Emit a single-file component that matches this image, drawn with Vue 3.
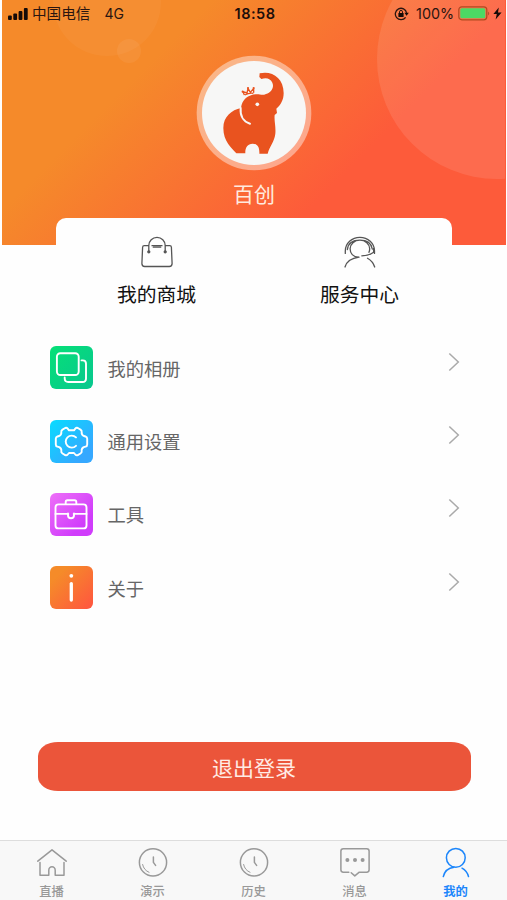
<script setup>
const shortcuts = [
  { id: 'mall', label: '我的商城' },
  { id: 'service', label: '服务中心' },
]
const menu = [
  { id: 'album', label: '我的相册' },
  { id: 'settings', label: '通用设置' },
  { id: 'tools', label: '工具' },
  { id: 'about', label: '关于' },
]
const tabs = [
  { id: 'live', label: '直播' },
  { id: 'demo', label: '演示' },
  { id: 'history', label: '历史' },
  { id: 'message', label: '消息' },
  { id: 'mine', label: '我的' },
]
const active = 'mine'
</script>

<template>
  <div class="screen">
    <header class="hero">
      <svg class="bubbles" viewBox="0 0 503 245">
        <circle cx="105" cy="2" r="54" fill="#fff" fill-opacity=".04" />
        <circle cx="127" cy="51" r="12" fill="#fff" fill-opacity=".06" />
        <circle cx="495" cy="59" r="120" fill="#fff" fill-opacity=".1" />
      </svg>
      <div class="status">
        <div class="status-left">
          <svg class="signal" width="20" height="12" viewBox="0 0 20 12">
            <rect x="0" y="7.6" width="3.8" height="4.4" rx="1" />
            <rect x="5.3" y="5.4" width="3.8" height="6.6" rx="1" />
            <rect x="10.6" y="3" width="3.8" height="9" rx="1" />
            <rect x="15.9" y="0" width="3.8" height="12" rx="1" />
          </svg>
          <span class="carrier">中国电信</span>
          <span class="net">4G</span>
        </div>
        <span class="time">18:58</span>
        <div class="status-right">
          <svg width="15" height="14" viewBox="0 0 15 14">
            <path d="M12.6 5.8A5.7 5.7 0 1 0 11.6 10.4" fill="none" stroke="#2a1510" stroke-width="1.3" />
            <path d="M10.4 5.8h4.4l-2.2 2.9z" />
            <rect x="4.4" y="6" width="5.2" height="4" rx=".5" />
            <path d="M5.5 6V4.9a1.5 1.5 0 0 1 3 0V6" fill="none" stroke="#2a1510" stroke-width="1" />
          </svg>
          <span class="percent">100%</span>
          <svg class="battery" width="33" height="15" viewBox="0 0 33 15">
            <rect x=".8" y=".8" width="28" height="13" rx="3" fill="none" stroke="#b04a20" stroke-width="1.2" />
            <rect x="2.3" y="2.3" width="25" height="10" rx="1.5" fill="#4cd964" />
            <path d="M30.2 5.4q2 2 0 4z" fill="#a8452b" />
          </svg>
          <svg width="9" height="13" viewBox="0 0 9 13"><path d="M5.8.5.4 7h3.4L2.6 12.5 8.6 5.5H5z" /></svg>
        </div>
      </div>
      <svg class="avatar" viewBox="36 31 348 348">
        <circle cx="210" cy="205" r="172" fill="#fff" fill-opacity=".43" />
        <circle cx="210" cy="205" r="156" fill="#f7f7f6" />
        <path fill="#e9531f" d="M227 86C262 77 299 98 299 145C299 166 290 181 277 192L279 205L272 211C270 229 276 246 274 267C271 292 257 304 251 327H226C227 308 221 297 206 297C190 297 183 310 184 326H157C143 309 118 291 118 250C118 216 143 196 171 190C174 164 194 149 219 149C229 149 236 153 246 148C263 142 271 127 265 114C260 102 247 97 232 103L226 97Z" />
        <path d="M170 190C168 212 177 231 198 237" fill="none" stroke="#f7f7f6" stroke-width="6" stroke-linecap="round" />
        <circle cx="220" cy="179" r="5.5" fill="#f7f7f6" />
        <path d="M181 151L177 141L189 145L192 131L199 143L209 131L209 144M182 151Q196 144 208 146" fill="none" stroke="#e9531f" stroke-width="4" stroke-linejoin="round" />
        <g fill="#e9531f"><circle cx="176" cy="141" r="3.2" /><circle cx="192" cy="130" r="3.2" /><circle cx="209" cy="130" r="3.2" /></g>
      </svg>
      <div class="nickname">百创</div>
    </header>

    <section class="card">
      <div v-for="s in shortcuts" :key="s.id" class="shortcut">
        <svg v-if="s.id === 'mall'" width="32" height="34" viewBox="0 0 32 34" class="line dark">
          <path d="M7.7 9.7H3.2Q1.7 9.7 1.6 11.2L.9 27.5Q.9 30.5 3.7 30.5H28.3Q31.1 30.5 31.1 27.5L30.4 11.2Q30.3 9.7 28.8 9.7H24.3M11 9.7H21M7.8 15.8V9.5A8.2 8.2 0 0 1 24.2 9.5V15.8M12.3 11.2H19.7" />
          <circle cx="7.8" cy="15.8" r="1" fill="#555" /><circle cx="24.2" cy="15.8" r="1" fill="#555" />
        </svg>
        <svg v-else width="32" height="34" viewBox="0 0 32 34" class="line dark">
          <path d="M1.3 17.4V15A14.6 13.7 0 0 1 30.5 15V17.4M29.6 12.5V16.2Q25 19.8 17.8 19.8M14.5 21.1C9 21.1 6.1 17.2 6.1 12.8A9.8 8.6 0 0 1 25.7 12.8Q25.7 15 24.9 16.3M3.4 13.5Q4.5 4.2 15.9 4.2Q26.8 4.2 28.3 13M1 31Q3.5 22.7 15 21.2M23.5 22.2Q28.8 25 30.7 31" />
        </svg>
        <span>{{ s.label }}</span>
      </div>
    </section>

    <ul class="menu">
      <li v-for="m in menu" :key="m.id" class="row">
        <span class="tile" :class="m.id">
          <svg v-if="m.id === 'album'" viewBox="0 0 43 43" class="line">
            <rect x="6.9" y="7.2" width="21.8" height="21.8" rx="3.5" />
            <path d="M31.5 14.4h1.2q3.3 0 3.3 3.3v14.8q0 3.5-3.5 3.5H18.2q-3.5 0-3.5-3.5v-1" />
          </svg>
          <svg v-else-if="m.id === 'settings'" viewBox="0 0 43 43" class="line">
            <path d="M19 10.3H24L25.3 8.6Q26.3 7.4 27.8 8L30.5 9.6Q32 10.6 31.7 12.2Q31.3 14.8 33.8 16L35.6 16.5Q37.2 17 37.2 18.8V24.4Q37.2 26.2 35.6 26.6L33.8 27.2Q31.3 28.4 31.7 31Q32 32.6 30.5 33.5L27.8 35.1Q26.3 35.8 25.3 34.5L24 33H19L17.7 34.5Q16.7 35.8 15.2 35.1L12.5 33.5Q11 32.6 11.3 31Q11.7 28.4 9.2 27.2L7.4 26.6Q5.8 26.2 5.8 24.4V18.8Q5.8 17 7.4 16.5L9.2 16Q11.7 14.8 11.3 12.2Q11 10.6 12.5 9.6L15.2 8Q16.7 7.4 17.7 8.6Z" />
            <path d="M26 17.4A6 6 0 1 0 26 25.8" />
          </svg>
          <svg v-else-if="m.id === 'tools'" viewBox="0 0 43 43" class="line">
            <rect x="5.5" y="11.4" width="31" height="24" rx="3" />
            <path d="M15.7 11V8.9q0-1.7 1.7-1.7h7.2q1.7 0 1.7 1.7V11M5.5 20.9h12.8M23.7 20.9h12.8M18 20.5v1.8a3 3 0 0 0 6 0v-1.8" />
          </svg>
          <svg v-else viewBox="0 0 43 43">
            <circle cx="21.3" cy="9.8" r="1.9" fill="#fff" />
            <path d="M21.3 17.6V34" stroke="#fff" stroke-width="3.3" stroke-linecap="round" />
          </svg>
        </span>
        <span class="label">{{ m.label }}</span>
        <svg class="chevron" width="12" height="20" viewBox="0 0 12 20"><path d="M1.3 1.5 10.3 10 1.3 18.5" /></svg>
      </li>
    </ul>

    <button class="logout">退出登录</button>

    <nav class="tabbar">
      <div v-for="t in tabs" :key="t.id" class="tab" :class="{ active: t.id === active }">
        <svg v-if="t.id === 'live'" width="32" height="32" viewBox="0 0 32 32" class="line">
          <path d="M1.8 15.2 16 3.8 30.2 15.2M4 16.5V29.3H12.8V24.2A3.2 3.5 0 0 1 19.2 24.2V29.3H28V16.5" />
        </svg>
        <svg v-else-if="t.id === 'demo' || t.id === 'history'" width="32" height="32" viewBox="0 0 32 32" class="line">
          <circle cx="16" cy="16.4" r="13.6" />
          <path d="M16.4 11V16.4L18.6 19.4" />
          <path class="glint" d="M5.6 18.5Q6.8 24.2 12 26.3" />
        </svg>
        <svg v-else-if="t.id === 'message'" width="32" height="32" viewBox="0 0 32 32" class="line">
          <path d="M9.8 26.2H4.3Q1.9 26.2 1.9 23.8V5.1Q1.9 2.7 4.3 2.7H27.7Q30.1 2.7 30.1 5.1V23.8Q30.1 26.2 27.7 26.2H20.3L15.8 29.9 12.2 26.7" />
          <g fill="currentColor" stroke="none"><circle cx="8.4" cy="14.1" r="2" /><circle cx="16" cy="14.1" r="2" /><circle cx="23.6" cy="14.1" r="2" /></g>
        </svg>
        <svg v-else width="32" height="32" viewBox="0 0 32 32" class="line">
          <circle cx="15.8" cy="11.8" r="9.4" />
          <path d="M3.3 30.6Q5.2 22.2 14 21.2M22 22.2Q27 24.8 28.5 30.6" />
        </svg>
        <span>{{ t.label }}</span>
      </div>
    </nav>
  </div>
</template>

<style>
body { margin: 0; background: #fff; }
</style>

<style scoped>
.screen {
  width: 507px;
  height: 900px;
  overflow: hidden;
  background: #fefefe;
  display: flex;
  flex-direction: column;
  font-family: "Noto Sans CJK SC", sans-serif;
}
.hero {
  position: relative;
  flex: none;
  height: 245px;
  margin: 0 1px 0 2px;
  background: linear-gradient(135deg, #f58a2a 28%, #fd5b3a 69%);
  display: flex;
  flex-direction: column;
  align-items: center;
}
.bubbles { position: absolute; inset: 0; width: 503px; height: 245px; }
.status {
  position: relative;
  align-self: stretch;
  box-sizing: border-box;
  height: 27px;
  padding: 0 4px 0 6px;
  display: grid;
  grid-template-columns: 1fr auto 1fr;
  align-items: center;
  font-size: 14.6px;
  line-height: 27px;
  color: #2a1510;
}
.status svg { fill: #160b08; display: block; }
.status-left, .status-right { display: flex; align-items: center; }
.status-right { justify-content: flex-end; }
.carrier { margin-left: 4px; line-height: 25px; padding-bottom: 2px; }
.net { margin-left: 14px; font-family: Inter, sans-serif; font-size: 14px; }
.time { font-family: Inter, sans-serif; font-weight: 600; font-size: 14.5px; letter-spacing: .5px; color: #1c0e0a; }
.percent { margin: 0 4px 0 7px; font-family: Inter, sans-serif; font-size: 14.3px; }
.battery { margin-right: 2px; }
.avatar { position: relative; flex: none; width: 116px; height: 116px; margin-top: 28px; }
.nickname { position: relative; margin-top: 6px; font-size: 21px; line-height: 32px; color: #ffeadf; }
.card {
  position: relative;
  flex: none;
  width: 396px;
  height: 112px;
  margin: -27px 0 0 56px;
  border-radius: 10px 10px 0 0;
  background: #fefefe;
  display: flex;
}
.shortcut {
  flex: none;
  width: 203px;
  padding: 18px 2px 0 0;
  box-sizing: border-box;
  display: flex;
  flex-direction: column;
  align-items: center;
  gap: 8px;
  font-size: 19.8px;
  line-height: 32px;
  color: #111;
}
.line { fill: none; stroke: currentColor; stroke-width: 1.6; stroke-linecap: round; stroke-linejoin: round; }
.dark { color: #555; stroke-width: 1.3; }
.menu { list-style: none; margin: 1px 0 0; padding: 0; flex: none; }
.row { height: 73.4px; display: flex; align-items: center; padding: 0 47px 0 50px; }
.tile { width: 43px; height: 43px; border-radius: 6px; color: #fff; flex: none; }
.tile svg { display: block; width: 43px; height: 43px; }
.tile .line { stroke-width: 1.9; }
.album { background: linear-gradient(135deg, #06e077, #08c78f); }
.settings { background: linear-gradient(135deg, #08dcff, #35a8ff 80%); }
.tools { background: linear-gradient(135deg, #ee70f8, #d03cfb 75%); }
.about { background: linear-gradient(135deg, #f58b29 20%, #ff5440); }
.label { flex: 1; margin-left: 14.5px; font-size: 18.3px; line-height: 28px; color: #666; }
.chevron { margin-bottom: 12px; fill: none; stroke: #aaa; stroke-width: 1.5; }
.logout {
  flex: none;
  width: 433px;
  height: 49px;
  margin: 117.5px 0 0 37.5px;
  padding: 0;
  border: 0;
  border-radius: 20px / 14px;
  background: #eb553a;
  color: #ffebe4;
  font: 21px/48px "Noto Sans CJK SC", sans-serif;
}
.tabbar {
  flex: none;
  box-sizing: border-box;
  height: 60px;
  margin-top: auto;
  padding: 5px 0 0 0;
  border-top: 1px solid #ddd;
  background: #f8f8f8;
  display: grid;
  grid-template-columns: repeat(5, 101px);
}
.tab { display: flex; flex-direction: column; align-items: center; color: #999; font-size: 12.3px; font-weight: 500; line-height: 20px; gap: 3px; padding-left: 2px; }
.tab .line { stroke-width: 1.5; }
.tab .glint { stroke-width: 1; }
.tab.active { color: #1c86fb; font-weight: 700; }
</style>
